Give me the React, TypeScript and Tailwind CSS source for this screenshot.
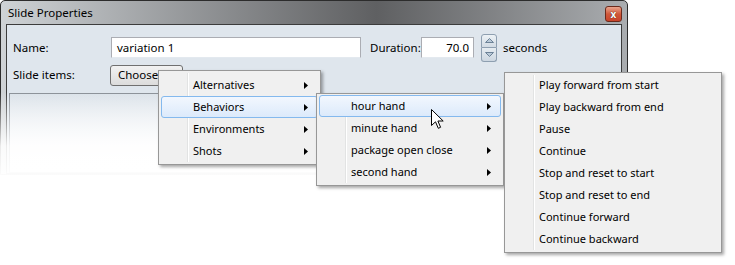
import React from "react";

type MenuItem = { label: string; sub?: boolean; active?: boolean };

const font = "font-['Segoe_UI','Noto_Sans',sans-serif]";

const SubArrow = () => (
  <svg width="4" height="7" viewBox="0 0 4 7" className="ml-auto">
    <path d="M0 0L4 3.5L0 7Z" fill="#000" />
  </svg>
);

const Menu = ({ items, className }: { items: MenuItem[]; className: string }) => {
  return (
    <div
      className={`absolute bg-[#f0f0f0] border border-[#979797] p-[2px] shadow-[2px_2px_3px_rgba(0,0,0,0.35)] ${className}`}
    >
      <div className="absolute top-[2px] bottom-[2px] left-[28px] w-[2px] border-l border-[#e2e3e3] bg-white" />
      {items.map((item) => (
        <div
          key={item.label}
          className={`relative flex items-center h-[22px] pl-[31px] pr-[9px] border rounded-[3px] text-[11px] text-black ${
            item.active
              ? "border-[#84b9ee] bg-gradient-to-b from-[#f2f7fe] to-[#dceafb]"
              : "border-transparent"
          }`}
        >
          <span>{item.label}</span>
          {item.sub && <SubArrow />}
        </div>
      ))}
    </div>
  );
};

const Cursor = () => (
  <svg width="13" height="21" viewBox="0 0 13 21" className="absolute left-[431px] top-[109px]">
    <path
      d="M0.5 0.5V16.5L4.5 12.8L7.3 19.3L9.6 18.3L6.9 12H12.2Z"
      fill="#fff"
      stroke="#000"
      strokeWidth="1"
      strokeLinejoin="round"
    />
  </svg>
);

export default function App() {
  return (
    <div className={`relative w-[735px] h-[265px] bg-white overflow-hidden ${font}`}>
      {/* dialog window */}
      <div className="w-[628px] h-[175px] border border-[#2c2c2c] rounded-t-[5px] bg-gradient-to-r from-[#cfd3d6] via-[#5f6062] via-60% to-[#aaadb0] flex flex-col px-[5px]">
        <div className="h-[23px] flex items-center justify-between pl-[2px]">
          <span className="text-[11.5px] text-black">Slide Properties</span>
          <div className="w-[17px] h-[16px] mt-[3px] rounded-[3px] border border-[#6b2a1c] bg-gradient-to-b from-[#e9a48d] via-[#d0583a] to-[#c8432a] flex items-center justify-center">
            <span className="text-[10px] font-bold leading-none text-white [text-shadow:0_0_1px_#000]">x</span>
          </div>
        </div>
        <div className="flex-1 border border-[#3c3c3c] bg-[#dfe6ed] flex flex-col text-[11.5px] text-black">
          <div className="flex items-center h-[21px] mt-[12px] pl-[6px]">
            <span className="w-[98px]">Name:</span>
            <div className="w-[250px] h-[21px] bg-white border border-[#abadb3] border-b-[#e3e9ef] flex items-center pl-[5px]">
              variation 1
            </div>
            <span className="ml-[9px] w-[51px] whitespace-nowrap">Duration:</span>
            <div className="w-[53px] h-[21px] bg-white border border-[#abadb3] border-b-[#e3e9ef] flex items-center justify-end pr-[4px]">
              70.0
            </div>
            <div className="ml-[7px] w-[16px] h-[28px] flex flex-col">
              <div className="h-[14px] rounded-t-[3px] border border-[#8e9fb0] bg-gradient-to-b from-[#edf2f6] to-[#d2dbe4] flex items-center justify-center">
                <svg width="9" height="5" viewBox="0 0 9 5">
                  <path d="M0.5 4.5L4.5 0.5L8.5 4.5Z" fill="#b9c9d8" stroke="#6c8297" />
                </svg>
              </div>
              <div className="h-[14px] rounded-b-[3px] border border-t-0 border-[#8e9fb0] bg-gradient-to-b from-[#e6ecf1] to-[#cdd7e1] flex items-center justify-center">
                <svg width="9" height="5" viewBox="0 0 9 5">
                  <path d="M0.5 0.5L4.5 4.5L8.5 0.5Z" fill="#b9c9d8" stroke="#6c8297" />
                </svg>
              </div>
            </div>
            <span className="ml-[6px]">seconds</span>
          </div>
          <div className="flex items-center h-[20px] mt-[7px] pl-[6px]">
            <span className="w-[97px]">Slide items:</span>
            <div className="w-[73px] h-[21px] rounded-[3px] border border-[#707070] bg-gradient-to-b from-[#f2f2f2] to-[#dcdcdc] flex items-center pl-[7px]">
              Choose
            </div>
          </div>
          <div className="flex-1 mt-[8px] ml-[2px] mr-[2px] border border-[#8a9097] bg-gradient-to-b from-[#dbe2e9] to-white" />
        </div>
      </div>
      {/* fade of the window into the page */}
      <div className="absolute left-0 top-[92px] w-[640px] h-[90px] bg-gradient-to-b from-transparent via-white/90 via-60% to-white" />

      <Menu
        className="left-[158px] top-[70px] w-[163px] pt-[3px]"
        items={[
          { label: "Alternatives", sub: true },
          { label: "Behaviors", sub: true, active: true },
          { label: "Environments", sub: true },
          { label: "Shots", sub: true },
        ]}
      />
      <Menu
        className="left-[316px] top-[93px] w-[188px] pt-[1px]"
        items={[
          { label: "hour hand", sub: true, active: true },
          { label: "minute hand", sub: true },
          { label: "package open close", sub: true },
          { label: "second hand", sub: true },
        ]}
      />
      <Menu
        className="left-[504px] top-[72px] w-[218px] pt-[1px]"
        items={[
          { label: "Play forward from start" },
          { label: "Play backward from end" },
          { label: "Pause" },
          { label: "Continue" },
          { label: "Stop and reset to start" },
          { label: "Stop and reset to end" },
          { label: "Continue forward" },
          { label: "Continue backward" },
        ]}
      />
      <Cursor />
    </div>
  );
}
